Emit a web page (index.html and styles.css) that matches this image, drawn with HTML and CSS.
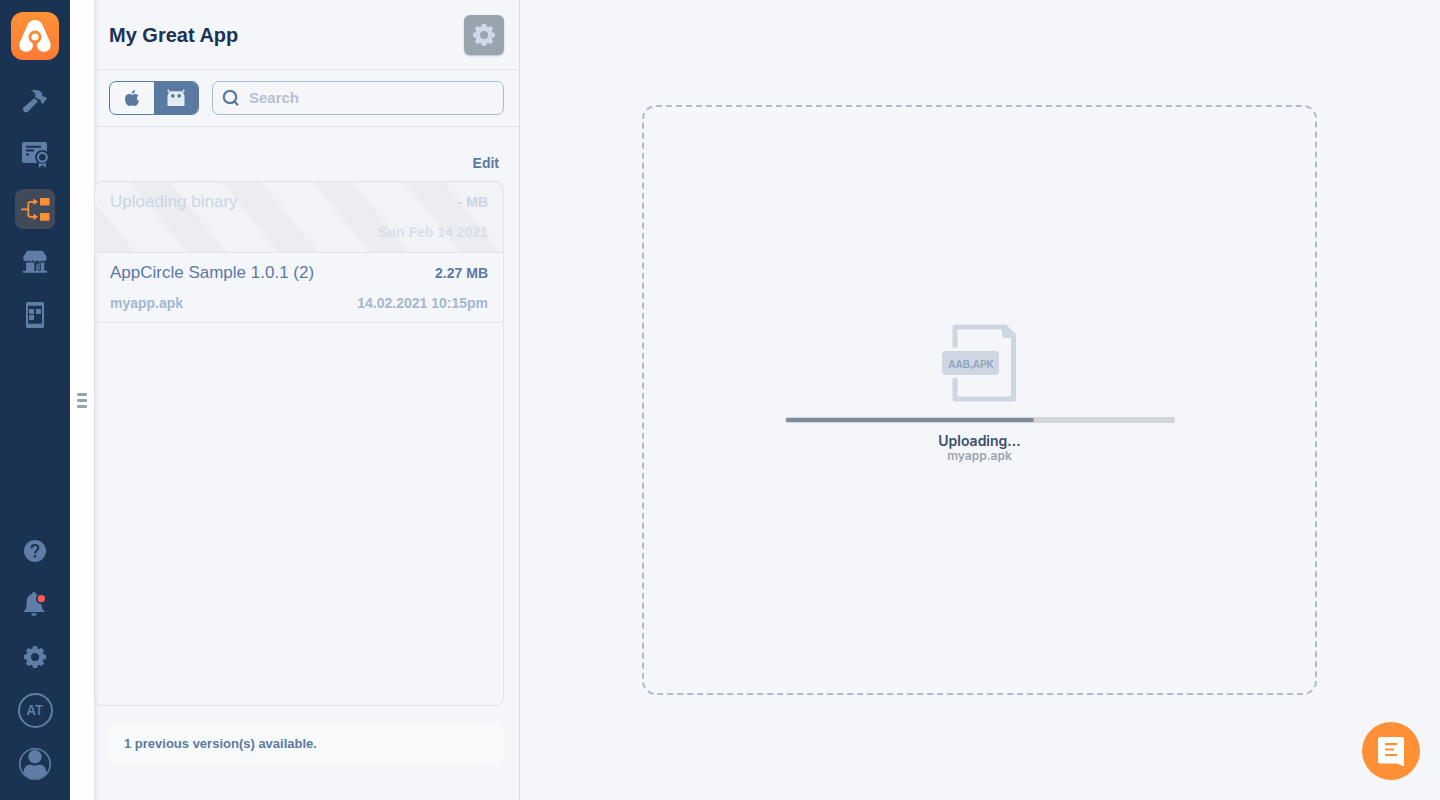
FILE: index.html
```html
<!DOCTYPE html>
<html lang="en">
<head>
<meta charset="utf-8">
<meta name="viewport" content="width=device-width, initial-scale=1">
<title>My Great App</title>
<link rel="stylesheet" href="styles.css">
</head>
<body>
<svg class="defs" aria-hidden="true">
  <symbol id="gear" viewBox="0 0 24 24">
    <circle cx="12" cy="12" r="6.5" fill="none" stroke="currentColor" stroke-width="4.800"/>
    <g fill="currentColor">
      <rect x="9.600" y="1" width="4.800" height="4.500" rx="1.300"/>
      <rect x="9.600" y="1" width="4.800" height="4.500" rx="1.300" transform="rotate(45 12 12)"/>
      <rect x="9.600" y="1" width="4.800" height="4.500" rx="1.300" transform="rotate(90 12 12)"/>
      <rect x="9.600" y="1" width="4.800" height="4.500" rx="1.300" transform="rotate(135 12 12)"/>
      <rect x="9.600" y="1" width="4.800" height="4.500" rx="1.300" transform="rotate(180 12 12)"/>
      <rect x="9.600" y="1" width="4.800" height="4.500" rx="1.300" transform="rotate(225 12 12)"/>
      <rect x="9.600" y="1" width="4.800" height="4.500" rx="1.300" transform="rotate(270 12 12)"/>
      <rect x="9.600" y="1" width="4.800" height="4.500" rx="1.300" transform="rotate(315 12 12)"/>
    </g>
  </symbol>
</svg>
<div class="app">
  <nav class="rail" aria-label="Main">
    <a class="logo" href="#" aria-label="Home">
      <svg viewBox="0 0 48 48" width="48" height="48">
        <defs><linearGradient id="lg" x1="0" y1="0" x2="0" y2="1"><stop offset="0" stop-color="#ff9236"/><stop offset="1" stop-color="#ff7a35"/></linearGradient></defs>
        <rect width="48" height="48" rx="12" fill="url(#lg)"/>
        <path d="M24 8c-3.300 0-5.800 1.600-7.300 4.500L9 30c-2.200 5.200 1 9.800 6 9.800 4 0 6.900-2.700 6.900-6.300 0-.9-.2-1.800-.6-2.600a6.500 6.500 0 1 1 5.400 0c-.4.800-.6 1.700-.6 2.600 0 3.600 2.900 6.300 6.900 6.300 5 0 8.200-4.600 6-9.800l-7.700-17.500C29.800 9.600 27.300 8 24 8z" fill="#fff"/>
        <circle cx="24" cy="25" r="3.500" fill="#fff"/>
      </svg>
    </a>
    <div class="rail-group">
      <a class="rail-item" href="#" aria-label="Build">
        <svg viewBox="0 0 40 40"><g fill="currentColor"><path d="M19.300 15l3.600 3.600L12.800 28.800c-2.500 2-6.300-1.500-4.300-4.300z"/><path d="M15.700 7.800C19 6.300 24 6.700 26.300 9.300c1.200 1.400.8 2.400 1 3.500l1.400 1.300 1.500-.7 1.600 2.400-3.800 4.900-2-.9.100-1.900-1.600-1.600-1.700.1-2.600-2.600c1-2.700-1-5.400-4.500-6z"/></g></svg>
      </a>
      <a class="rail-item" href="#" aria-label="Signing identities">
        <svg viewBox="0 0 40 40"><rect x="7" y="6" width="25" height="21" rx="2" fill="currentColor"/><g class="cut-line"><path d="M11 10.700h15M11 14.500h8M11 18.500h3"/></g><circle class="cut" cx="27.400" cy="21.300" r="7.400"/><path d="M23.800 24h7v8l-3.500-3-3.500 3z" fill="currentColor"/><circle class="cut" cx="27.400" cy="21.300" r="6.400"/><circle cx="27.400" cy="21.300" r="4.400" fill="none" stroke="currentColor" stroke-width="2.200"/></svg>
      </a>
      <a class="rail-item active" href="#" aria-label="Distribution" aria-current="page">
        <svg viewBox="0 0 40 40"><g fill="currentColor"><rect x="25" y="9" width="9.500" height="7.500" rx=".7"/><rect x="25" y="24" width="9.500" height="7.700" rx=".7"/><path d="M18.500 9.500l4.500 3.300-4.500 3.300zM18.500 24.500l4.500 3.300-4.500 3.300z"/></g><path d="M6 20.400h7M20 12.800h-4.500q-2.200 0-2.200 2.200v10.600q0 2.200 2.200 2.200H20" fill="none" stroke="currentColor" stroke-width="1.800"/></svg>
      </a>
      <a class="rail-item" href="#" aria-label="Enterprise store">
        <svg viewBox="0 0 40 40"><path d="M13.500 8.800h13q1.500 0 2.300 1.400L31.600 15v1.700a2.600 2.600 0 0 1-4.600 1.600 2.800 2.800 0 0 1-4.700 0 2.800 2.800 0 0 1-4.700 0 2.800 2.800 0 0 1-4.700 0 2.600 2.600 0 0 1-4.600-1.600V15l2.900-4.800q.8-1.400 2.300-1.400zM11 20.500h18.300v8.300h2.700v2H8v-2h3z" fill="currentColor"/><path class="cut" d="M19.300 20.500h6.500v8.300h-6.500z"/><path d="M21 23.800l4-2M21 26.300l4-2M21 28.500l4-2" stroke="currentColor" stroke-width="1.300"/></svg>
      </a>
      <a class="rail-item" href="#" aria-label="Testing portal">
        <svg viewBox="0 0 40 40"><rect x="11" y="7" width="18" height="26" rx="1.500" fill="currentColor"/><path class="cut" d="M13 10.700h14v18H13z"/><g fill="currentColor"><rect x="14" y="14" width="5" height="5" rx=".6"/><rect x="21" y="14" width="5" height="5" rx=".6"/><rect x="14" y="20" width="5" height="5" rx=".6"/></g></svg>
      </a>
    </div>
    <div class="rail-group rail-bottom">
      <a class="rail-item" href="#" aria-label="Help">
        <svg viewBox="0 0 40 40"><circle cx="20" cy="20" r="11" fill="currentColor"/><path class="cut-line" d="M16.600 17.300c0-2 1.500-3.200 3.400-3.200s3.400 1.200 3.400 3c0 2.300-3.300 2.700-3.300 5.300"/><circle class="cut" cx="20" cy="25.300" r="1.300"/></svg>
      </a>
      <a class="rail-item" href="#" aria-label="Notifications">
        <svg viewBox="0 0 40 40"><path d="M19 8c1.200 0 1.900.8 1.900 2 3.600.9 5.500 3.600 5.500 7.300 0 5.700.6 7.700 3 9.600V28H9v-1.100c2.400-1.900 2.700-3.900 2.700-9.600 0-3.700 1.800-6.400 5.400-7.300 0-1.200.7-2 1.900-2zM16.300 29.300h5.400c-.3 1.700-1.300 2.700-2.700 2.700s-2.400-1-2.700-2.700z" fill="currentColor"/><circle class="cut" cx="26.400" cy="14.700" r="5.400"/><circle cx="26.400" cy="14.700" r="3.600" fill="#ff5959"/></svg>
      </a>
      <a class="rail-item" href="#" aria-label="Settings"><svg class="gear"><use href="#gear"/></svg></a>
      <a class="rail-item" href="#" aria-label="Organization AT"><span class="initials">AT</span></a>
      <a class="rail-item" href="#" aria-label="Profile">
        <svg viewBox="0 0 40 40"><circle cx="20" cy="21" r="15.200" fill="none" stroke="currentColor" stroke-width="1.600"/><g fill="currentColor"><circle cx="20" cy="13.800" r="6.700"/><path d="M8.600 30c0-5 2.500-8.600 6.500-8.600 3 1.500 6.800 1.500 9.800 0 4 0 6.500 3.600 6.500 8.600-2.800 3.700-7 5.600-11.400 5.600S11.400 33.700 8.600 30z"/></g></svg>
      </a>
    </div>
  </nav>
  <div class="grip"><span></span><span></span><span></span></div>
  <section class="panel">
    <header class="panel-head">
      <h1>My Great App</h1>
      <button class="config" type="button" aria-label="App settings"><svg class="gear"><use href="#gear"/></svg></button>
    </header>
    <div class="tools">
      <div class="segments">
        <button type="button" aria-label="iOS" aria-pressed="false"><svg viewBox="0 0 16 18" width="16" height="18"><path d="M11 1c.1 2.200-1.300 3.700-3.200 3.700C7.700 2.900 9.300 1.300 11 1zM8 5.700c.8 0 1.700-.8 3.200-.8 1.400 0 2.600.6 3.200 1.500-2.200 1.500-1.900 4.500.7 5.700-.8 2.400-2.300 4.900-4 4.900-1.200 0-1.600-.6-3.100-.6s-1.800.6-3 .6c-1.900 0-4-3.900-4-7C1 6.800 2.900 5 5 5c1.300 0 2.300.7 3 .7z" fill="currentColor"/></svg></button>
        <button class="on" type="button" aria-label="Android" aria-pressed="true"><svg viewBox="0 0 18 18" width="18" height="18"><path d="M.7.800l3 3.400M17.300.800l-3 3.400" stroke="currentColor" stroke-width="1.300"/><path d="M.5 17V7C.5 4.500 2.500 2.500 5 2.200h8c2.500.3 4.500 2.300 4.500 4.800v10z" fill="currentColor"/><g fill="#5b7aa2"><circle cx="5.800" cy="6.800" r="1.900"/><circle cx="12.200" cy="6.800" r="1.900"/></g></svg></button>
      </div>
      <label class="search">
        <svg viewBox="0 0 18 18" width="18" height="18"><circle cx="8" cy="8" r="6.200" fill="none" stroke="currentColor" stroke-width="2.200"/><path d="M12.400 12.400l3.600 3.800" stroke="currentColor" stroke-width="2.200"/></svg>
        <input type="search" placeholder="Search" aria-label="Search">
      </label>
    </div>
    <div class="edit-row"><button class="edit" type="button">Edit</button></div>
    <ul class="versions">
      <li class="version uploading">
        <div class="line"><span class="name">Uploading binary</span><span class="size">- MB</span></div>
        <div class="line sub"><span></span><span class="date">Sun Feb 14 2021</span></div>
      </li>
      <li class="version">
        <div class="line"><span class="name">AppCircle Sample 1.0.1 (2)</span><span class="size">2.27 MB</span></div>
        <div class="line sub"><span>myapp.apk</span><span class="date">14.02.2021 10:15pm</span></div>
      </li>
    </ul>
    <p class="note">1 previous version(s) available.</p>
  </section>
  <main class="main">
    <div class="dropzone">
      <svg class="file" viewBox="0 0 76 78" width="76" height="78" role="img" aria-label="AAB, APK file">
        <path d="M13 23.500V3h50l8.500 8.500V75H13V54" fill="none" stroke="#cdd6e1" stroke-width="5" stroke-linejoin="round"/>
        <path d="M60 1h4.500L74 10.500V14H63q-3 0-3-3z" fill="#cdd6e1"/>
        <rect y="27" width="57" height="24" rx="4" fill="#cdd6e1"/>
        <text x="29" y="44" text-anchor="middle">AAB,APK</text>
      </svg>
      <div class="bar" role="progressbar" aria-label="Upload" aria-valuenow="64" aria-valuemin="0" aria-valuemax="100"><div class="bar-fill" style="width:64%"></div></div>
      <div class="status">Uploading...</div>
      <div class="filename">myapp.apk</div>
    </div>
  </main>
</div>
<button class="chat" type="button" aria-label="Open chat">
  <svg viewBox="0 0 58 58" width="58" height="58"><path d="M18 15h22q2 0 2 2v26q0 1.400-1.400 1L35 41.500H18q-2 0-2-2V17q0-2 2-2z" fill="#fff"/><path d="M23 22.100h12M23 27.500h9M23 33h12" stroke="#ff9035" stroke-width="2.200"/></svg>
</button>
</body>
</html>
```
FILE: styles.css
```css
* { box-sizing: border-box; }
body {
  margin: 0;
  background: #f4f6fa;
  color: #5b7aa2;
  font-family: "Liberation Sans", Arial, sans-serif;
  font-size: 14px;
  line-height: 20px;
}
button, input { font: inherit; color: inherit; }
button { padding: 0; border: 0; background: none; cursor: pointer; }
svg { display: block; }
.defs { display: none; }
.app { display: flex; min-height: 100vh; }

.rail {
  display: flex;
  flex-direction: column;
  align-items: center;
  flex: 0 0 70px;
  padding: 12px 0 17px;
  background: #1a3352;
}
.logo { margin-bottom: 23px; }
.rail-group { display: flex; flex-direction: column; gap: 13px; }
.rail-bottom { margin-top: auto; }
.rail-item {
  display: grid;
  place-items: center;
  width: 40px;
  height: 40px;
  border-radius: 8px;
  color: #5f7da5;
  text-decoration: none;
}
.rail-item svg { width: 40px; height: 40px; }
.rail-item.active { background: #414a5a; color: #ff9035; }
.cut { fill: #1a3352; }
.cut-line { fill: none; stroke: #1a3352; stroke-width: 2; }
.rail-item .gear, .gear { width: 24px; height: 24px; }
.initials {
  display: grid;
  place-items: center;
  width: 35px;
  height: 35px;
  border: 2px solid;
  border-radius: 50%;
  font: 600 13px/16px Inter, sans-serif;
}

.grip {
  display: flex;
  flex: 0 0 24px;
  flex-direction: column;
  align-items: center;
  justify-content: center;
  gap: 3px;
  background: #fff;
}
.grip span { width: 10px; height: 3px; border-radius: 1px; background: #98a2ac; }

.panel {
  display: flex;
  flex: 0 0 426px;
  flex-direction: column;
  border-right: 1px solid #d8dce2;
  box-shadow: inset 5px 0 5px -4px #d3dcea;
}
.panel-head {
  display: flex;
  align-items: center;
  justify-content: space-between;
  height: 70px;
  padding: 0 15px;
  border-bottom: 1px solid #dfe3ea;
}
h1 { margin: 0; color: #1a3352; font-size: 20px; line-height: 24px; }
.config {
  display: grid;
  place-items: center;
  width: 40px;
  height: 40px;
  border-radius: 6px;
  background: #9aa4ae;
  box-shadow: 0 1px 2px #b4c2d2;
  color: #cddae8;
}
.tools {
  display: flex;
  gap: 13px;
  padding: 11px 15px;
  border-bottom: 1px solid #dfe3ea;
}
.segments {
  display: flex;
  width: 90px;
  height: 34px;
  overflow: hidden;
  border: 1px solid #5b7aa2;
  border-radius: 7px;
}
.segments button { display: grid; flex: 1; place-items: center; }
.segments .on { background: #5b7aa2; color: #e4eaf2; }
.search {
  display: flex;
  flex: 1;
  align-items: center;
  gap: 9px;
  min-width: 0;
  padding: 0 9px;
  border: 1px solid #a9bbd0;
  border-radius: 7px;
}
.search input {
  flex: 1;
  min-width: 0;
  padding: 0;
  border: 0;
  outline: 0;
  background: none;
  font-size: 15px;
  font-weight: 700;
}
.search input::placeholder { color: #b4c2d5; opacity: 1; }
.edit-row { display: flex; justify-content: flex-end; padding: 26px 20px 8px; }
.edit { font-weight: 700; }
.versions {
  flex: 1;
  margin: 0 15px 0 0;
  padding: 0;
  overflow: hidden;
  border: 1px solid #dfe4ec;
  border-radius: 8px;
  list-style: none;
}
.version {
  display: flex;
  flex-direction: column;
  gap: 10px;
  padding: 10px 15px 9px;
  border-bottom: 1px solid #dfe3ec;
}
.line { display: flex; justify-content: space-between; font-weight: 700; }
.name { font-size: 17px; font-weight: 400; }
.sub { color: #a5b7cd; }
.uploading {
  padding-bottom: 10px;
  background: repeating-linear-gradient(51deg, #ecedf1 0 31px, #f1f3f7 31px 71px);
  color: #cbd5e2;
}
.uploading .sub { color: #d9dfe8; }
.note {
  margin: 18px 15px 36px;
  padding: 10px 15px;
  border-radius: 8px;
  background: #f8f9fb;
  font-size: 13px;
  font-weight: 700;
}

.main { display: flex; flex: 1; min-width: 0; padding: 105px 123px 105px 122px; }
.dropzone {
  display: flex;
  flex: 1;
  flex-direction: column;
  align-items: center;
  justify-content: center;
  padding-bottom: 14px;
  border: 2px dashed #adbccf;
  border-radius: 14px;
}
.file text { fill: #8fa5c0; font-size: 10px; font-weight: 700; }
.bar {
  width: 390px;
  max-width: 90%;
  height: 6px;
  margin: 15px 0 10px;
  padding: 1px;
  border-radius: 2px;
  background: #d2d6db;
}
.bar-fill { height: 4px; border-radius: 2px; background: #7e8b98; }
.status { color: #3c5069; font: 600 14px/16px Inter, sans-serif; }
.filename { color: #9ba5b0; font: 600 12px/14px Inter, sans-serif; }

.chat {
  position: fixed;
  right: 20px;
  bottom: 20px;
  width: 58px;
  height: 58px;
  border-radius: 50%;
  background: #ff9035;
}
```
